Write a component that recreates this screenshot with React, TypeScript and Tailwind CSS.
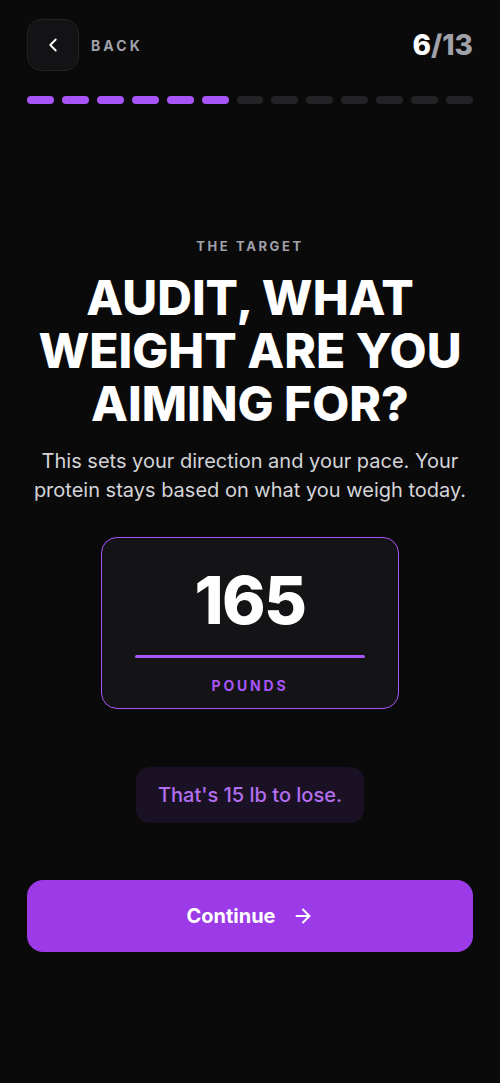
import { ChevronLeft, ArrowRight } from "lucide-react"

const steps = 13
const current = 6

export default function App() {
  return (
    <div
      className="min-h-[1083px] w-full bg-[#0a0a0b] px-[27px] text-white"
      style={{ fontFamily: "Inter, 'Noto Sans', sans-serif" }}
    >
      {/* header */}
      <div className="flex items-center justify-between pt-[19px]">
        <div className="flex items-center gap-3">
          <button className="flex h-[52px] w-[52px] items-center justify-center rounded-[14px] border border-[#222225] bg-[#131315]">
            <ChevronLeft className="h-[22px] w-[22px] text-white" strokeWidth={2} />
          </button>
          <span className="text-[14px] font-bold tracking-[0.22em] text-[#a1a1aa]">BACK</span>
        </div>
        <div className="text-[28px] font-extrabold">
          <span className="text-white">6</span>
          <span className="text-[#a1a1aa]">/13</span>
        </div>
      </div>

      {/* progress */}
      <div className="mt-[25px] flex gap-2">
        {Array.from({ length: steps }).map((_, i) => (
          <div
            key={i}
            className={i < current ? "h-2 flex-1 rounded-full bg-[#a855f7]" : "h-2 flex-1 rounded-full bg-[#232326]"}
          />
        ))}
      </div>

      {/* title block */}
      <div className="mt-[133px] flex flex-col items-center text-center">
        <div className="text-[13px] font-bold tracking-[0.2em] text-[#a1a1aa]">THE TARGET</div>
        <h1 className="mt-[14px] text-[48px] font-extrabold uppercase leading-[53px] text-white">
          Audit, what weight are you aiming for?
        </h1>
        <p className="mt-[17px] text-[20px] leading-[29px] text-[#d4d4d8]">
          This sets your direction and your pace. Your protein stays based on what you weigh today.
        </p>
      </div>

      {/* value card */}
      <div className="mt-[32px] flex justify-center">
        <div className="flex h-[172px] w-[298px] flex-col items-center rounded-[16px] border border-[#a855f7] bg-[#141416] px-[33px]">
          <div className="mt-[22px] text-[66px] font-extrabold leading-[80px] tracking-tight text-white">165</div>
          <div className="mt-[15px] h-[3px] w-full rounded-full bg-[#a855f7]" />
          <div className="mt-[17px] text-[14px] font-bold tracking-[0.2em] text-[#a855f7]">POUNDS</div>
        </div>
      </div>

      {/* delta pill */}
      <div className="mt-[58px] flex justify-center">
        <div className="flex h-[56px] items-center rounded-[14px] bg-[#1a1224] px-[22px] text-[20px] font-medium text-[#b46ef0]">
          That's 15 lb to lose.
        </div>
      </div>

      {/* continue */}
      <button className="mt-[57px] flex h-[72px] w-full items-center justify-center gap-4 rounded-[16px] bg-[#9b3ae6] text-[20px] font-bold text-white">
        Continue
        <ArrowRight className="h-[22px] w-[22px]" strokeWidth={2.2} />
      </button>
    </div>
  )
}
